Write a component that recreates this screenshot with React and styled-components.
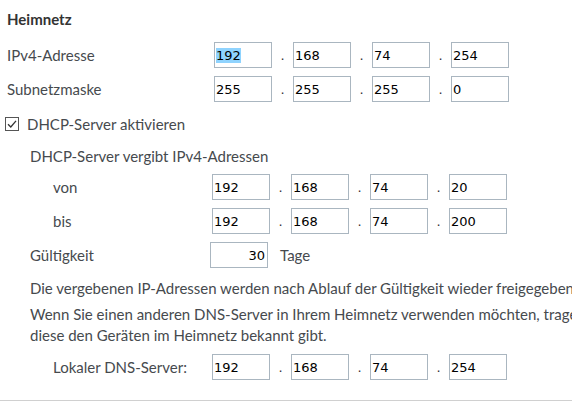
import React from "react";
import styled, { createGlobalStyle } from "styled-components";

const GlobalStyle = createGlobalStyle`
  html, body {
    margin: 0;
    padding: 0;
    background: #fff;
    overflow: hidden;
  }
  body {
    font-family: "Lato", "Open Sans", sans-serif;
    font-size: 15px;
    color: #464a4e;
  }
`;

const Page = styled.div`
  width: 572px;
  height: 403px;
  overflow: hidden;
  display: flex;
  flex-direction: column;
  padding-top: 9px;
  box-sizing: border-box;
`;

const Heading = styled.h3`
  margin: 0 0 0 7px;
  font-size: 15px;
  font-weight: 700;
  line-height: 20px;
  color: #333;
`;

const Row = styled.div`
  display: flex;
  align-items: center;
  height: 26px;
  margin-top: ${p => p.$gap}px;
  padding-left: ${p => p.$indent}px;
`;

const Label = styled.span`
  width: ${p => p.$width}px;
  flex-shrink: 0;
  white-space: nowrap;
  line-height: 20px;
`;

const IpGroup = styled.div`
  display: flex;
  align-items: center;
`;

const Field = styled.input`
  box-sizing: border-box;
  width: 58px;
  height: 26px;
  border: 1px solid #aab6c0;
  padding: 0 2px 0 1px;
  margin: 0;
  font-family: "DejaVu Sans", Verdana, sans-serif;
  font-size: 13px;
  line-height: 22px;
  color: #000;
  text-align: ${p => (p.$right ? "right" : "left")};
  outline: none;
  background: #fff;

  &::selection {
    background: #8fd3fe;
    color: #000;
  }
`;

const Dot = styled.span`
  width: 21px;
  text-align: center;
  font-family: "DejaVu Sans", Verdana, sans-serif;
  font-size: 13px;
  color: #333;
`;

const CheckLine = styled.label`
  display: flex;
  align-items: center;
  gap: 8px;
  margin: 12px 0 0 5px;
  line-height: 20px;
  white-space: nowrap;
`;

const Text = styled.p`
  margin: ${p => p.$gap}px 0 0 ${p => p.$indent}px;
  line-height: ${p => p.$lh || 20}px;
  white-space: nowrap;
`;

const Unit = styled.span`
  margin-left: 12px;
`;

const Rule = styled.hr`
  margin: 20px 0 0;
  border: none;
  border-top: 1px solid #d0d0d0;
  height: 0;
`;

function CheckIcon() {
  return (
    <svg width="14" height="14" viewBox="0 0 14 14">
      <rect x="0.5" y="0.5" width="13" height="13" fill="#fff" stroke="#555" />
      <path d="M3 7.2 L5.8 10 L11 3.8" fill="none" stroke="#333" strokeWidth="1.3" />
    </svg>
  );
}

function IpFields({ parts, selectFirst }) {
  return (
    <IpGroup>
      {parts.map((p, i) => (
        <React.Fragment key={i}>
          {i > 0 && <Dot>.</Dot>}
          <Field
            defaultValue={p}
            autoFocus={selectFirst && i === 0}
            onFocus={selectFirst && i === 0 ? e => e.target.select() : undefined}
          />
        </React.Fragment>
      ))}
    </IpGroup>
  );
}

export default function App() {
  return (
    <Page>
      <GlobalStyle />
      <Heading>Heimnetz</Heading>

      <Row $gap={13} $indent={7}>
        <Label $width={207}>IPv4-Adresse</Label>
        <IpFields parts={["192", "168", "74", "254"]} selectFirst />
      </Row>
      <Row $gap={8} $indent={7}>
        <Label $width={207}>Subnetzmaske</Label>
        <IpFields parts={["255", "255", "255", "0"]} />
      </Row>

      <CheckLine>
        <CheckIcon />
        DHCP-Server aktivieren
      </CheckLine>

      <Text $gap={12} $indent={30}>DHCP-Server vergibt IPv4-Adressen</Text>

      <Row $gap={8} $indent={53}>
        <Label $width={159}>von</Label>
        <IpFields parts={["192", "168", "74", "20"]} />
      </Row>
      <Row $gap={8} $indent={53}>
        <Label $width={159}>bis</Label>
        <IpFields parts={["192", "168", "74", "200"]} />
      </Row>
      <Row $gap={8} $indent={30}>
        <Label $width={180}>Gültigkeit</Label>
        <Field defaultValue="30" $right />
        <Unit>Tage</Unit>
      </Row>

      <Text $gap={10} $indent={30}>
        Die vergebenen IP-Adressen werden nach Ablauf der Gültigkeit wieder freigegeben.
      </Text>
      <Text $gap={6} $indent={30} $lh={21}>
        Wenn Sie einen anderen DNS-Server in Ihrem Heimnetz verwenden möchten, tragen Sie ihn hier ein,
        <br />
        diese den Geräten im Heimnetz bekannt gibt.
      </Text>

      <Row $gap={8} $indent={53}>
        <Label $width={159}>Lokaler DNS-Server:</Label>
        <IpFields parts={["192", "168", "74", "254"]} />
      </Row>

      <Rule />
    </Page>
  );
}
